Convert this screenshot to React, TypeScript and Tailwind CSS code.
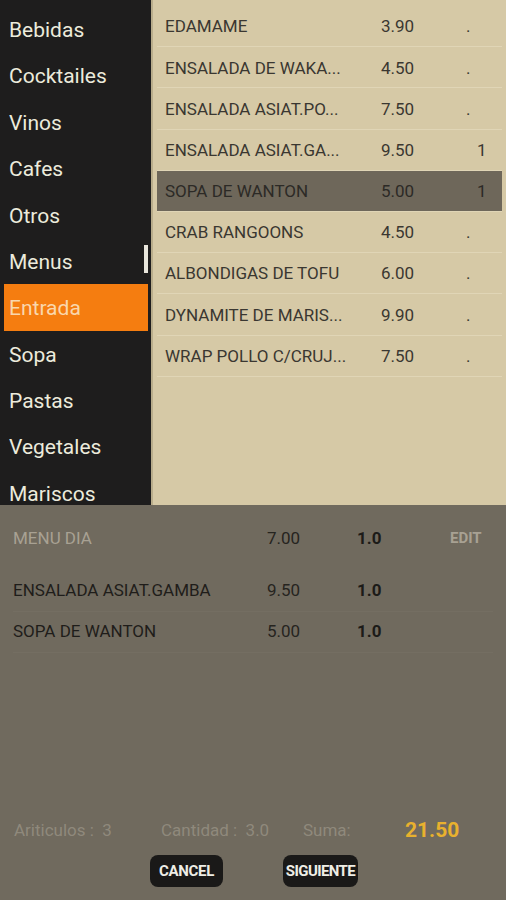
const categories = [
  "Bebidas",
  "Cocktailes",
  "Vinos",
  "Cafes",
  "Otros",
  "Menus",
  "Entrada",
  "Sopa",
  "Pastas",
  "Vegetales",
  "Mariscos",
];

const products = [
  { name: "EDAMAME", price: "3.90", qty: "." },
  { name: "ENSALADA DE WAKA...", price: "4.50", qty: "." },
  { name: "ENSALADA ASIAT.PO...", price: "7.50", qty: "." },
  { name: "ENSALADA ASIAT.GA...", price: "9.50", qty: "1" },
  { name: "SOPA DE WANTON", price: "5.00", qty: "1", selected: true },
  { name: "CRAB RANGOONS", price: "4.50", qty: "." },
  { name: "ALBONDIGAS DE TOFU", price: "6.00", qty: "." },
  { name: "DYNAMITE DE MARIS...", price: "9.90", qty: "." },
  { name: "WRAP POLLO C/CRUJ...", price: "7.50", qty: "." },
];

const order = [
  { name: "ENSALADA ASIAT.GAMBA", price: "9.50", qty: "1.0" },
  { name: "SOPA DE WANTON", price: "5.00", qty: "1.0" },
];

export default function App() {
  return (
    <div className="flex h-[900px] w-[506px] flex-col overflow-hidden bg-[#706a5e] font-['Roboto',sans-serif]">
      {/* Top: categories + products */}
      <div className="flex h-[505px] shrink-0">
        <div className="relative w-[151px] shrink-0 overflow-hidden bg-[#1e1d1d] pt-[6px] pl-1 pr-[3px]">
          {categories.map((c) => (
            <div
              key={c}
              className={
                c === "Entrada"
                  ? "flex h-[46.4px] items-center bg-[#f57d10] pl-[5px] pt-[3px] text-[21px] text-[#f9d7ad]"
                  : "flex h-[46.4px] items-center pl-[5px] pt-[3px] text-[21px] text-[#ecebdc]"
              }
            >
              {c}
            </div>
          ))}
          <div className="absolute left-[144px] top-[245px] h-[28px] w-[4px] bg-[#e9e6dc]" />
        </div>
        <div className="flex-1 border-l-2 border-[#b9ad8c] bg-[#d6c9a6] pt-[6px] pr-[4px] pl-[4px]">
          {products.map((p) => (
            <div
              key={p.name}
              className={
                p.selected
                  ? "flex h-[41.2px] items-center border-b border-[#e0d5b6] bg-[#6e675a] pt-[2px] text-[17px] text-[#2c2a26]"
                  : "flex h-[41.2px] items-center border-b border-[#e0d5b6] pt-[2px] text-[17px] text-[#3a3731]"
              }
            >
              <span className="w-[224px] pl-[8px] whitespace-nowrap">{p.name}</span>
              <span className="w-[85px]">{p.price}</span>
              <span className={p.qty === "1" ? "pl-[11px]" : ""}>{p.qty}</span>
            </div>
          ))}
        </div>
      </div>

      {/* Order summary */}
      <div className="flex flex-1 flex-col px-[13px]">
        <div className="flex h-[66px] items-center pt-[1px] text-[17px]">
          <span className="w-[254px] text-[#a8a193]">MENU DIA</span>
          <span className="w-[90px] text-[#26241f]">7.00</span>
          <span className="w-[93px] font-bold text-[#1c1b18]">1.0</span>
          <span className="text-[15px] font-bold text-[#a8a193]">EDIT</span>
        </div>
        {order.map((o) => (
          <div
            key={o.name}
            className="flex h-[41px] items-center border-b border-[#746e62] text-[17px] first:mt-[3px]"
          >
            <span className="w-[254px] text-[#1f1d1a]">{o.name}</span>
            <span className="w-[90px] text-[#26241f]">{o.price}</span>
            <span className="font-bold text-[#1c1b18]">{o.qty}</span>
          </div>
        ))}

        <div className="mt-auto flex items-center pb-[4px] text-[17px] text-[#8f897c]">
          <span className="w-[148px] pl-[1px]">Ariticulos :&nbsp; 3</span>
          <span className="w-[142px]">Cantidad :&nbsp; 3.0</span>
          <span className="w-[102px]">Suma:</span>
          <span className="text-[21px] font-bold text-[#e8b12e]">21.50</span>
        </div>
        <div className="flex h-[50px] items-start gap-[60px] pl-[137px] pt-[5px]">
          <button className="flex h-[32px] w-[73px] items-center justify-center rounded-[8px] bg-[#1a1918] text-[15px] font-bold tracking-[-0.3px] text-[#efeee6]">
            CANCEL
          </button>
          <button className="flex h-[32px] w-[75px] items-center justify-center rounded-[8px] bg-[#1a1918] text-[15px] font-bold tracking-[-0.6px] text-[#efeee6]">
            SIGUIENTE
          </button>
        </div>
      </div>
    </div>
  );
}
